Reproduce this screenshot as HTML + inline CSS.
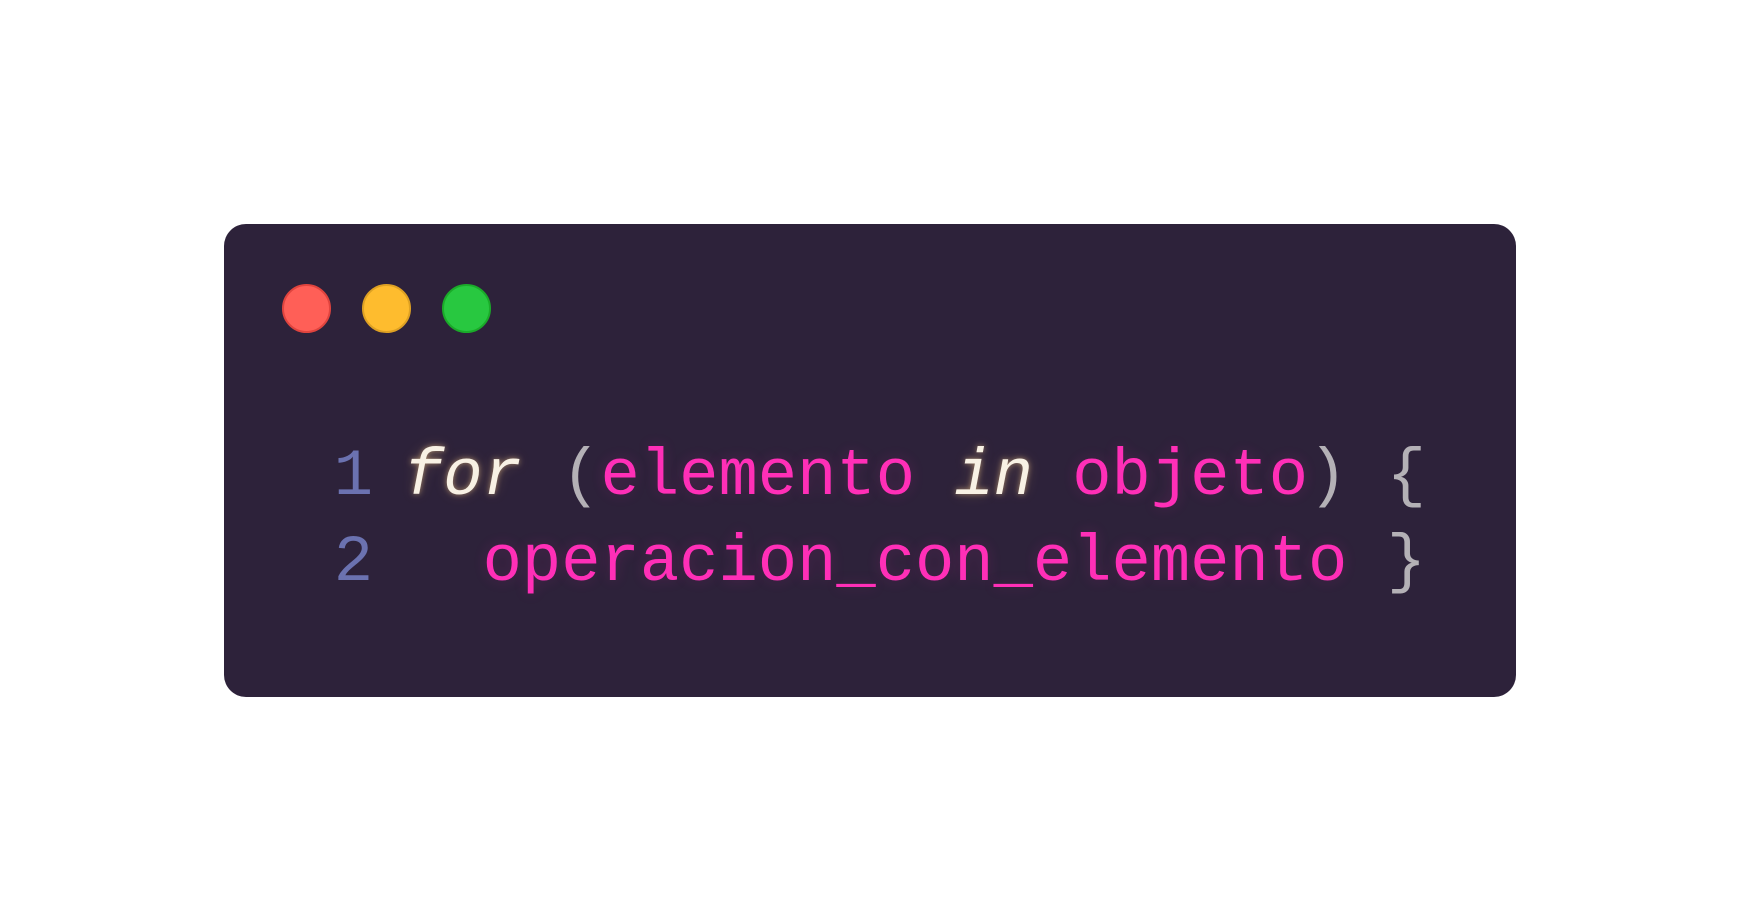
<!DOCTYPE html>
<html><head><meta charset="utf-8"><style>
html,body{margin:0;padding:0;background:#fff;width:1740px;height:920px;overflow:hidden}
.card{position:absolute;left:224px;top:224px;width:1292px;height:473px;background:#2d223a;border-radius:22px}
.dot{position:absolute;top:284px;width:49px;height:49px;border-radius:50%;box-sizing:border-box}
.r{left:282px;background:#ff5f57;border:2px solid #e0443e}
.y{left:362px;background:#febc2e;border:2px solid #dea123}
.g{left:442px;background:#28c840;border:2px solid #1aab29}
.code{position:absolute;left:0;top:434px;font-family:"Liberation Mono",monospace;font-size:65.5px;line-height:86px;white-space:pre}
.ln{position:absolute;width:373px;text-align:right;color:#6b72b0}
.tx{position:absolute;left:404px}
.k{color:#f8f1e4;font-style:italic;text-shadow:0 0 6px rgba(255,210,140,.55),0 0 14px rgba(255,200,120,.2)}
.p{color:#ff2fb7;text-shadow:0 0 14px rgba(255,47,183,.18)}
.u{color:#b4b1b6}
</style></head><body>
<div class="card"></div>
<div class="dot r"></div><div class="dot y"></div><div class="dot g"></div>
<div class="code">
<div class="ln" style="top:0">1</div><div class="tx" style="top:0"><span class="k">for</span> <span class="u">(</span><span class="p">elemento</span> <span class="k">in</span> <span class="p">objeto</span><span class="u">)</span> <span class="u">{</span></div>
<div class="ln" style="top:86px">2</div><div class="tx" style="top:86px">  <span class="p">operacion_con_elemento</span> <span class="u">}</span></div>
</div>
</body></html>
